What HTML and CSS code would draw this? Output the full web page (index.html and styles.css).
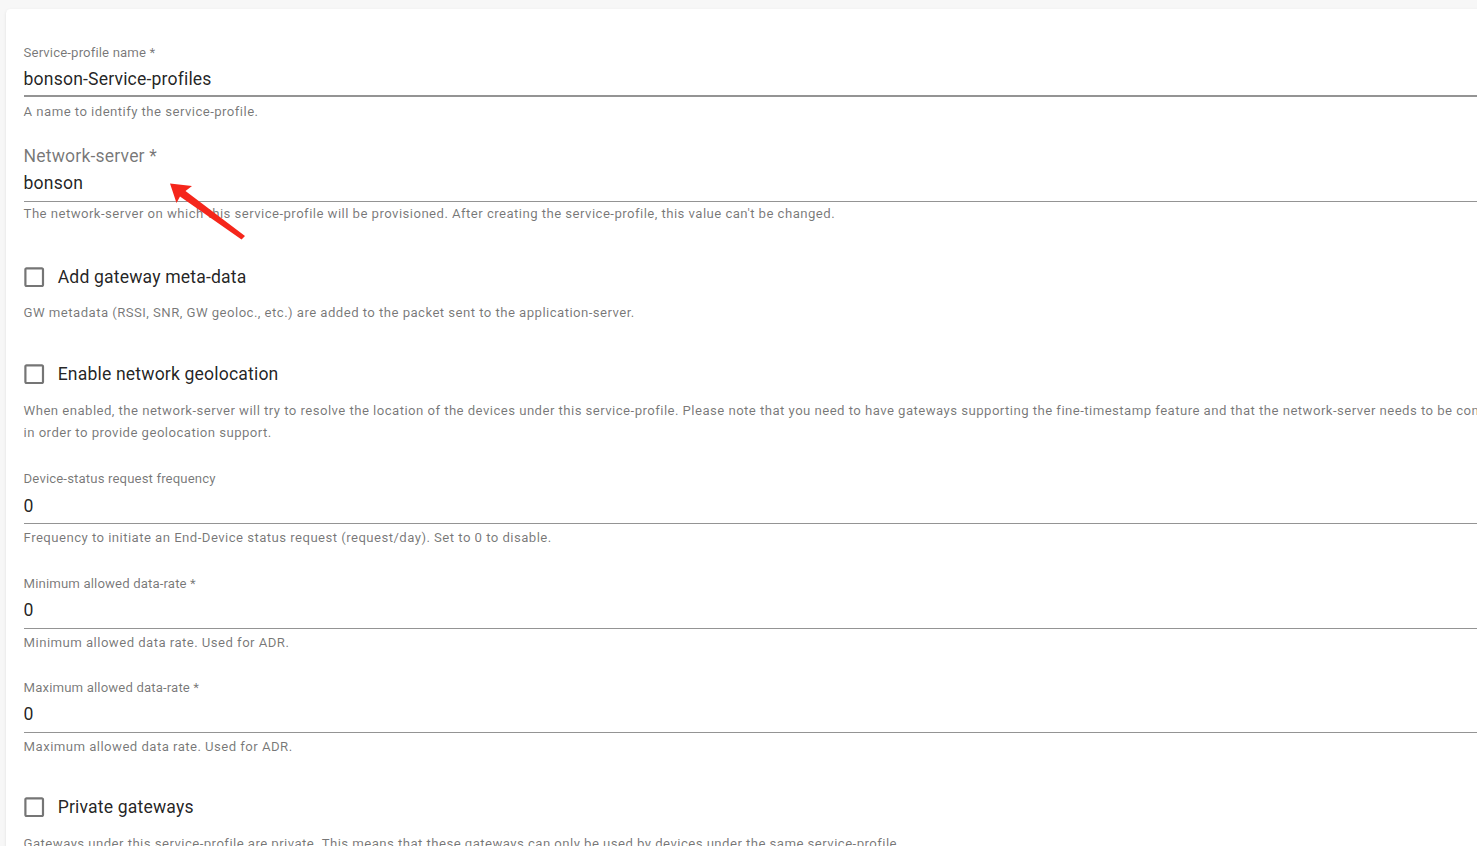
FILE: index.html
```html
<!DOCTYPE html>
<html lang="en">
<head>
<meta charset="utf-8">
<title>Service-profile</title>
<link rel="stylesheet" href="styles.css">
</head>
<body>
<div class="page">
  <div class="card">
    <form class="card-content">
      <div class="field">
        <label class="field-label">Service-profile name *</label>
        <div class="input input-strong">bonson-Service-profiles</div>
        <p class="helper">A name to identify the service-profile.</p>
      </div>

      <div class="field field-select">
        <label class="field-label field-label-large">Network-server *</label>
        <div class="input">bonson</div>
        <p class="helper helper-flush">The network-server on which this service-profile will be provisioned. After creating the service-profile, this value can't be changed.</p>
      </div>

      <div class="field">
        <div class="check-row">
          <span class="checkbox">
            <svg viewBox="0 0 24 24" width="24" height="24"><path d="M19 5v14H5V5h14m0-2H5c-1.11 0-2 .9-2 2v14c0 1.1.89 2 2 2h14c1.1 0 2-.9 2-2V5c0-1.1-.9-2-2-2z"/></svg>
          </span>
          <span class="check-label">Add gateway meta-data</span>
        </div>
        <p class="helper helper-tight">GW metadata (RSSI, SNR, GW geoloc., etc.) are added to the packet sent to the application-server.</p>
      </div>

      <div class="field field-loose">
        <div class="check-row">
          <span class="checkbox">
            <svg viewBox="0 0 24 24" width="24" height="24"><path d="M19 5v14H5V5h14m0-2H5c-1.11 0-2 .9-2 2v14c0 1.1.89 2 2 2h14c1.1 0 2-.9 2-2V5c0-1.1-.9-2-2-2z"/></svg>
          </span>
          <span class="check-label">Enable network geolocation</span>
        </div>
        <p class="helper">When enabled, the network-server will try to resolve the location of the devices under this service-profile. Please note that you need to have gateways supporting the fine-timestamp feature and that the network-server needs to be configured in order to provide geolocation support.</p>
      </div>

      <div class="field">
        <label class="field-label">Device-status request frequency</label>
        <div class="input">0</div>
        <p class="helper">Frequency to initiate an End-Device status request (request/day). Set to 0 to disable.</p>
      </div>

      <div class="field">
        <label class="field-label">Minimum allowed data-rate *</label>
        <div class="input">0</div>
        <p class="helper">Minimum allowed data rate. Used for ADR.</p>
      </div>

      <div class="field">
        <label class="field-label">Maximum allowed data-rate *</label>
        <div class="input">0</div>
        <p class="helper">Maximum allowed data rate. Used for ADR.</p>
      </div>

      <div class="field">
        <div class="check-row">
          <span class="checkbox">
            <svg viewBox="0 0 24 24" width="24" height="24"><path d="M19 5v14H5V5h14m0-2H5c-1.11 0-2 .9-2 2v14c0 1.1.89 2 2 2h14c1.1 0 2-.9 2-2V5c0-1.1-.9-2-2-2z"/></svg>
          </span>
          <span class="check-label">Private gateways</span>
        </div>
        <p class="helper helper-tight">Gateways under this service-profile are private. This means that these gateways can only be used by devices under the same service-profile.</p>
      </div>
    </form>
  </div>
</div>

<svg class="annotation" width="1477" height="846" viewBox="0 0 1477 846">
  <polygon points="170,183.5 192,186 185.5,191 245,236 241.5,239.5 180,196.5 176.5,203" fill="#f5261b"/>
</svg>
</body>
</html>
```

FILE: styles.css
```css
html, body {
  margin: 0;
  padding: 0;
}

body {
  background: #f7f7f7;
  overflow: hidden;
  width: 1477px;
  height: 846px;
  position: relative;
  font-family: Roboto, "Noto Sans", "Liberation Sans", sans-serif;
}

.page {
  zoom: 1.1;
  padding: 8.6px 0 0 5.45px;
}

.card {
  width: 1404px;
  background: #fff;
  border-radius: 4px;
  box-shadow: 0 2px 1px -1px rgba(0,0,0,0.12), 0 1px 1px 0 rgba(0,0,0,0.08), 0 1px 3px 0 rgba(0,0,0,0.08);
}

.card-content {
  padding: 16px;
  display: flex;
  flex-direction: column;
}

.field {
  display: flex;
  flex-direction: column;
  margin: 16px 0 8px;
}

.field-select {
  margin-bottom: 10.5px;
}

.field-loose {
  margin-bottom: 9px;
}

.field-label {
  display: block;
  height: 16px;
  font-size: 12px;
  line-height: 15px;
  letter-spacing: 0.00938em;
  color: rgba(0,0,0,0.54);
}

.field-label-large {
  font-size: 16px;
  line-height: 14.4px;
}

.input {
  box-sizing: border-box;
  height: 32px;
  padding: 6px 0;
  font-size: 16px;
  line-height: 19px;
  letter-spacing: 0.00938em;
  color: rgba(0,0,0,0.87);
  border-bottom: 1px solid rgba(0,0,0,0.42);
}

.input-strong {
  padding-bottom: 5px;
  border-bottom-width: 2px;
}

.helper {
  margin: 3px 0 0;
  font-size: 12px;
  line-height: 1.66;
  letter-spacing: 0.03333em;
  color: rgba(0,0,0,0.54);
}

.helper-tight {
  margin-top: 2px;
}

.helper-flush {
  margin-top: 1px;
}

.check-row {
  display: flex;
  align-items: center;
  margin-left: -11px;
  height: 42px;
}

.checkbox {
  display: flex;
  padding: 9px;
}

.checkbox svg {
  fill: rgba(0,0,0,0.54);
}

.check-label {
  font-size: 16px;
  line-height: 1.5;
  letter-spacing: 0.00938em;
  color: rgba(0,0,0,0.87);
}

.annotation {
  position: absolute;
  left: 0;
  top: 0;
  pointer-events: none;
}
```
